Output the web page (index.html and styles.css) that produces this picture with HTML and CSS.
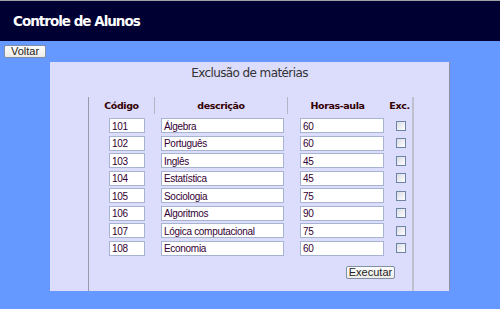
FILE: index.html
```html
<!DOCTYPE html>
<html lang="pt">
<head>
  <meta charset="UTF-8" />
  <title>Controle de Alunos</title>
  <link rel="stylesheet" href="styles.css">
</head>
<body>
  <div class="topo">Controle de Alunos</div>
  <button class="botao voltar">Voltar</button>

  <div class="painel">
    <h2 class="titulo">Exclusão de matérias</h2>
    <div class="quadro">
      <div class="linha cabecalho">
        <div class="col c1">Código</div>
        <div class="col c2">descrição</div>
        <div class="col c3">Horas-aula</div>
        <div class="col c4">Exc.</div>
      </div>
      <div class="linhas">
        <div class="linha">
          <div class="col c1"><span class="campo codigo">101</span></div>
          <div class="col c2"><span class="campo descricao">Álgebra</span></div>
          <div class="col c3"><span class="campo horas">60</span></div>
          <div class="col c4"><input type="checkbox" class="marca"></div>
        </div>
        <div class="linha">
          <div class="col c1"><span class="campo codigo">102</span></div>
          <div class="col c2"><span class="campo descricao">Português</span></div>
          <div class="col c3"><span class="campo horas">60</span></div>
          <div class="col c4"><input type="checkbox" class="marca"></div>
        </div>
        <div class="linha">
          <div class="col c1"><span class="campo codigo">103</span></div>
          <div class="col c2"><span class="campo descricao">Inglês</span></div>
          <div class="col c3"><span class="campo horas">45</span></div>
          <div class="col c4"><input type="checkbox" class="marca"></div>
        </div>
        <div class="linha">
          <div class="col c1"><span class="campo codigo">104</span></div>
          <div class="col c2"><span class="campo descricao">Estatística</span></div>
          <div class="col c3"><span class="campo horas">45</span></div>
          <div class="col c4"><input type="checkbox" class="marca"></div>
        </div>
        <div class="linha">
          <div class="col c1"><span class="campo codigo">105</span></div>
          <div class="col c2"><span class="campo descricao">Sociologia</span></div>
          <div class="col c3"><span class="campo horas">75</span></div>
          <div class="col c4"><input type="checkbox" class="marca"></div>
        </div>
        <div class="linha">
          <div class="col c1"><span class="campo codigo">106</span></div>
          <div class="col c2"><span class="campo descricao">Algoritmos</span></div>
          <div class="col c3"><span class="campo horas">90</span></div>
          <div class="col c4"><input type="checkbox" class="marca"></div>
        </div>
        <div class="linha">
          <div class="col c1"><span class="campo codigo">107</span></div>
          <div class="col c2"><span class="campo descricao">Lógica computacional</span></div>
          <div class="col c3"><span class="campo horas">75</span></div>
          <div class="col c4"><input type="checkbox" class="marca"></div>
        </div>
        <div class="linha">
          <div class="col c1"><span class="campo codigo">108</span></div>
          <div class="col c2"><span class="campo descricao">Economia</span></div>
          <div class="col c3"><span class="campo horas">60</span></div>
          <div class="col c4"><input type="checkbox" class="marca"></div>
        </div>
      </div>
      <div class="acoes">
        <button class="botao executar">Executar</button>
      </div>
    </div>
  </div>
</body>
</html>
```

FILE: styles.css
```css
body {
  margin: 0;
  background-color: #6699ff;
  border-top: 1px solid #a0a0a0;
  font-family: "Liberation Sans", Arial, sans-serif;
}
.topo {
  background-color: #000033;
  color: #ffffff;
  height: 40px;
  line-height: 40px;
  padding-left: 13px;
  font-family: "DejaVu Sans", Verdana, sans-serif;
  font-weight: bold;
  font-size: 13.5px;
  letter-spacing: -1px;
}
.botao {
  font-family: "Liberation Sans", Arial, sans-serif;
  font-size: 11px;
  color: #222222;
  background: linear-gradient(#ffffff, #ecebe6);
  border: 1px solid #7f8fa8;
  border-radius: 2px;
  padding: 0;
  height: 13px;
  line-height: 11px;
}
.voltar {
  display: block;
  margin: 4px 0 0 4px;
  width: 42px;
}
.painel {
  margin: 4px 0 0 50px;
  width: 399px;
  height: 229px;
  background-color: #dcdcfc;
  border-right: 1px solid #9090a8;
  display: flex;
  flex-direction: column;
}
.titulo {
  margin: 0;
  padding-top: 3px;
  text-align: center;
  font-family: "DejaVu Sans", Verdana, sans-serif;
  font-weight: normal;
  font-size: 12px;
  line-height: 16px;
  color: #333333;
  letter-spacing: -0.6px;
}
.quadro {
  flex: 1;
  margin: 16px 0 0 38px;
  width: 323px;
  border-left: 1px solid #9a9aaa;
  border-right: 2px solid #c0c0cc;
}
.linha {
  display: grid;
  grid-template-columns: 66px 133px 99px 25px;
  height: 15px;
}
.cabecalho {
  height: 17px;
  font-family: "DejaVu Sans", Verdana, sans-serif;
  font-weight: bold;
  font-size: 9.5px;
  letter-spacing: -0.4px;
  color: #330000;
}
.cabecalho .col {
  line-height: 17px;
  text-align: center;
}
.cabecalho .c1,
.cabecalho .c2 {
  border-right: 1px solid #b4b4c4;
}
.linhas {
  padding-top: 4px;
  display: flex;
  flex-direction: column;
  gap: 2.5px;
}
.linhas .col {
  display: flex;
  align-items: center;
}
.linhas .c1 { padding-left: 20px; }
.linhas .c2 { padding-left: 6px; }
.linhas .c3 { padding-left: 12px; }
.linhas .c4 { padding-left: 9px; }
.campo {
  display: block;
  box-sizing: border-box;
  height: 15px;
  padding: 0.5px 2px 0;
  border: 1px solid #a6b4d2;
  background: #ffffff;
  font-size: 10px;
  line-height: 13px;
  letter-spacing: -0.3px;
  white-space: nowrap;
  color: #330033;
}
.codigo { width: 36px; }
.descricao { width: 123px; }
.horas { width: 84px; }
.marca {
  appearance: none;
  margin: 0;
  width: 10px;
  height: 10px;
  border: 1px solid #6e84a6;
  background: linear-gradient(135deg, #d8dce4, #ffffff);
}
.acoes {
  margin-top: 10.5px;
  display: flex;
  justify-content: flex-end;
  padding-right: 17px;
}
.executar {
  width: 49px;
}
```
